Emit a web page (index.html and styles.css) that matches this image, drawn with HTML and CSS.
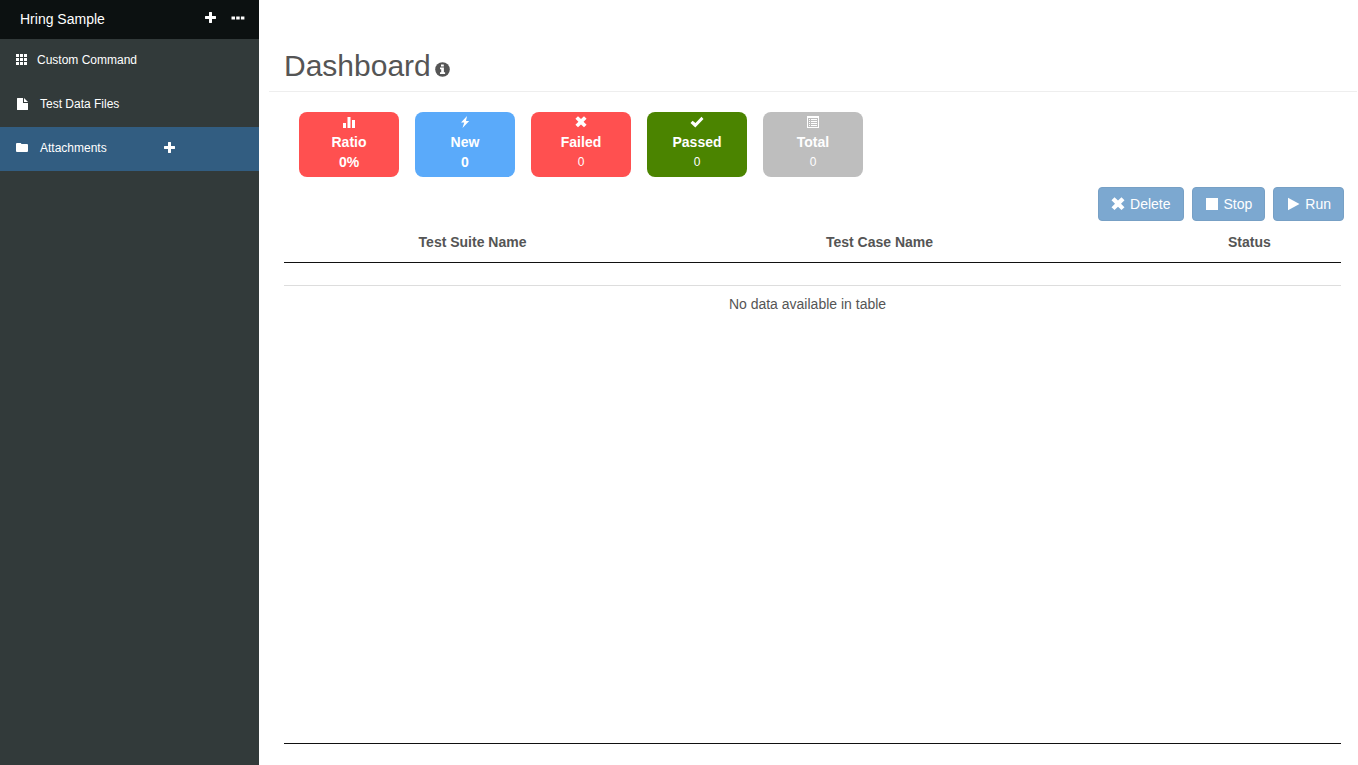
FILE: index.html
```html
<!DOCTYPE html>
<html lang="en">
<head>
<meta charset="utf-8">
<title>Dashboard</title>
<link rel="stylesheet" href="styles.css">
</head>
<body>
<svg class="sprite" aria-hidden="true">
  <symbol id="plus" viewBox="0 0 12 12"><path d="M4 .4q0-.4.4-.4h2.200q.4 0 .4.4V4h3.600q.4 0 .4.4v2.200q0 .4-.4.4H7v3.600q0 .4-.4.4H4.400q-.4 0-.4-.4V7H.4Q0 7 0 6.600V4.400Q0 4 .4 4H4z"/></symbol>
  <symbol id="cross" viewBox="0 0 14 14"><path d="M3.500.3 7 3.600 10.500.3 13.500 3.300 10 6.700l3.500 3.500-3 2.900L7 9.800l-3.500 3.300-3-2.900L4 6.700.5 3.300z"/></symbol>
</svg>
<div class="app">
  <aside class="sidebar">
    <header class="project">
      <span class="project-name">Hring Sample</span>
      <button class="icon-button" type="button" aria-label="Add"><svg class="icon icon-small"><use href="#plus"/></svg></button>
      <button class="icon-button" type="button" aria-label="More"><svg class="icon icon-large" viewBox="0 0 14 14"><path d="M.5 5.500h3.500v3H.5zM5.200 5.500h3.500v3H5.200zM9.900 5.500h3.500v3H9.900z"/></svg></button>
    </header>
    <nav class="menu">
      <div class="menu-item">
        <a class="menu-link menu-link-tight" href="#"><svg class="icon icon-small" viewBox="0 0 12 12"><path d="M0 0h3v3H0zM4 0h3v3H4zM8 0h3v3H8zM0 4h3v3H0zM4 4h3v3H4zM8 4h3v3H8zM0 8h3v3H0zM4 8h3v3H4zM8 8h3v3H8z"/></svg>Custom Command</a>
      </div>
      <div class="menu-item">
        <a class="menu-link" href="#"><svg class="icon icon-small" viewBox="0 0 12 12"><path d="M1.500 0H7v5h5v6.500q0 .500-.500.500h-10Q1 12 1 11.500V.500Q1 0 1.500 0zM8 0l4 4H8z"/></svg>Test Data Files</a>
      </div>
      <div class="menu-item menu-item-active">
        <a class="menu-link" href="#"><svg class="icon icon-small" viewBox="0 0 12 12"><path d="M0 2Q0 1 1 1h3.500q.7 0 .9 1H11q1 0 1 1v6q0 1-1 1H1q-1 0-1-1z"/></svg>Attachments</a>
        <button class="icon-button" type="button" aria-label="Add attachment"><svg class="icon icon-small"><use href="#plus"/></svg></button>
      </div>
    </nav>
  </aside>
  <main class="content">
    <div class="page-header">
      <h1 class="title">Dashboard</h1>
      <svg class="icon icon-info" viewBox="0 0 15 15"><circle cx="7.500" cy="7.500" r="7.300"/><path class="info-mark" d="M6 2.500h2.800v2H6zM5 5.600h3.900v4.700h1.200v1.600H5v-1.600h1.200V7.200H5z"/></svg>
    </div>
    <section class="stats">
      <div class="stat red">
        <svg class="icon icon-small" viewBox="0 0 12 12"><path d="M0 7h3v5H0zM4.500 1h3v11h-3zM9 4h3v8H9z"/></svg>
        <span class="stat-name">Ratio</span><strong class="stat-name">0%</strong>
      </div>
      <div class="stat blue">
        <svg class="icon icon-small" viewBox="0 0 12 12"><path d="M8 0 2 6.600h3.200L3.500 12l6.700-7.100H7z"/></svg>
        <span class="stat-name">New</span><strong class="stat-name">0</strong>
      </div>
      <div class="stat red">
        <svg class="icon icon-small"><use href="#cross"/></svg>
        <span class="stat-name">Failed</span><span class="stat-value">0</span>
      </div>
      <div class="stat green">
        <svg class="icon icon-large" viewBox="0 0 14 14"><path d="M.5 8 2.600 5.700l2.900 2.400 6-6.400 2 2.200-8.200 8.600z"/></svg>
        <span class="stat-name">Passed</span><span class="stat-value">0</span>
      </div>
      <div class="stat gray">
        <svg class="icon icon-small" viewBox="0 0 12 12"><path fill-rule="evenodd" d="M0 0h12v12H0zM1 2v9h10V2zM2 3h1v1H2zM4 3h6v1H4zM2 5h1v1H2zM4 5h6v1H4zM2 7h1v1H2zM4 7h6v1H4zM2 9h1v1H2zM4 9h6v1H4z"/></svg>
        <span class="stat-name">Total</span><span class="stat-value">0</span>
      </div>
    </section>
    <div class="actions">
      <button class="button" type="button"><svg class="icon icon-large"><use href="#cross"/></svg>Delete</button>
      <button class="button" type="button"><svg class="icon icon-large" viewBox="0 0 14 14"><path d="M1 1h12v12H1z"/></svg>Stop</button>
      <button class="button" type="button"><svg class="icon icon-large" viewBox="0 0 14 14"><path d="M2 .8 13.500 7 2 13.300z"/></svg>Run</button>
    </div>
    <div class="results">
      <table class="table">
        <colgroup><col class="col-select"><col class="col-suite"><col class="col-case"><col class="col-status"></colgroup>
        <thead>
          <tr><td></td><th scope="col">Test Suite Name</th><th scope="col">Test Case Name</th><th scope="col">Status</th></tr>
        </thead>
        <tbody>
          <tr class="spacer"><td colspan="4"></td></tr>
          <tr><td class="empty" colspan="4">No data available in table</td></tr>
        </tbody>
      </table>
    </div>
  </main>
</div>
</body>
</html>
```
FILE: styles.css
```css
* { box-sizing: border-box; }
body {
  margin: 0;
  background: #fff;
  color: #555;
  font: 14px/20px "Liberation Sans", Arial, sans-serif;
}
.sprite { position: absolute; width: 0; height: 0; }
.icon { display: block; flex: none; fill: currentColor; }
.icon-small { width: 12px; height: 12px; }
.icon-large { width: 14px; height: 14px; }
.icon-info { width: 15px; height: 15px; }
.info-mark { fill: #fff; }
.app { display: flex; min-height: 100vh; }

.sidebar { flex: none; width: 259px; background: #323a3a; color: #fff; }
.project {
  display: flex;
  align-items: center;
  gap: 14px;
  height: 39px;
  padding: 0 14px 2px 20px;
  background: #0c1111;
}
.project-name { flex: 1; }
.project .icon-button { padding-bottom: 2px; }
.icon-button {
  padding: 0;
  border: 0;
  background: none;
  color: inherit;
  cursor: pointer;
}
.menu-item {
  display: flex;
  align-items: center;
  height: 44px;
  padding: 0 16px 2px;
  font-size: 12px;
}
.menu-item-active { background: #325d81; }
.menu-link {
  display: flex;
  align-items: center;
  gap: 12px;
  width: 148px;
  color: #fff;
  text-decoration: none;
}
.menu-link-tight { gap: 9px; }

.content {
  flex: 1;
  display: flex;
  flex-direction: column;
  min-width: 0;
  padding: 49px 0 21px 10px;
}
.page-header {
  display: flex;
  align-items: flex-end;
  gap: 4px;
  margin-right: 1px;
  padding: 0 15px 9px;
  border-bottom: 1px solid #eee;
}
.page-header .icon { margin-bottom: 5px; }
.title { margin: 0; font-size: 30px; font-weight: 400; line-height: 33px; }

.stats { display: flex; flex-wrap: wrap; gap: 16px; padding: 20px 30px 10px; }
.stat {
  display: flex;
  flex-direction: column;
  align-items: center;
  width: 100px;
  padding-bottom: 5px;
  border-radius: 8px;
  color: #fff;
}
.stat .icon { margin: 4px 0; }
.stat .icon-large { margin: 3px 0; }
.stat-name { font-weight: 700; }
.stat-value { font-size: 12px; }
.red { background: #ff5050; }
.blue { background: #5aaafa; }
.green { background: #4b8400; }
.gray { background: #bebebe; }

.actions { display: flex; justify-content: flex-end; gap: 8px; padding-right: 14px; }
.button {
  display: flex;
  align-items: center;
  gap: 5px;
  padding: 6px 12px;
  border: 1px solid #77a0c5;
  border-radius: 4px;
  background: #7ca8d0;
  color: #fff;
  font: inherit;
}

.results {
  flex: 1;
  margin: 0 17px 0 15px;
  border-bottom: 1px solid #111;
}
.table { width: 100%; table-layout: fixed; border-collapse: separate; border-spacing: 0; }
.col-select { width: 7%; }
.col-suite { width: 23%; }
.col-case { width: 54%; }
.col-status { width: 16%; }
.table th, .table thead td {
  padding: 11px 14px 10px 0;
  border-bottom: 1px solid #111;
  text-align: center;
}
.spacer td { height: 22px; padding: 0; }
.empty {
  padding: 8px 18px 8px 8px;
  border-top: 1px solid #ddd;
  text-align: center;
}
```
